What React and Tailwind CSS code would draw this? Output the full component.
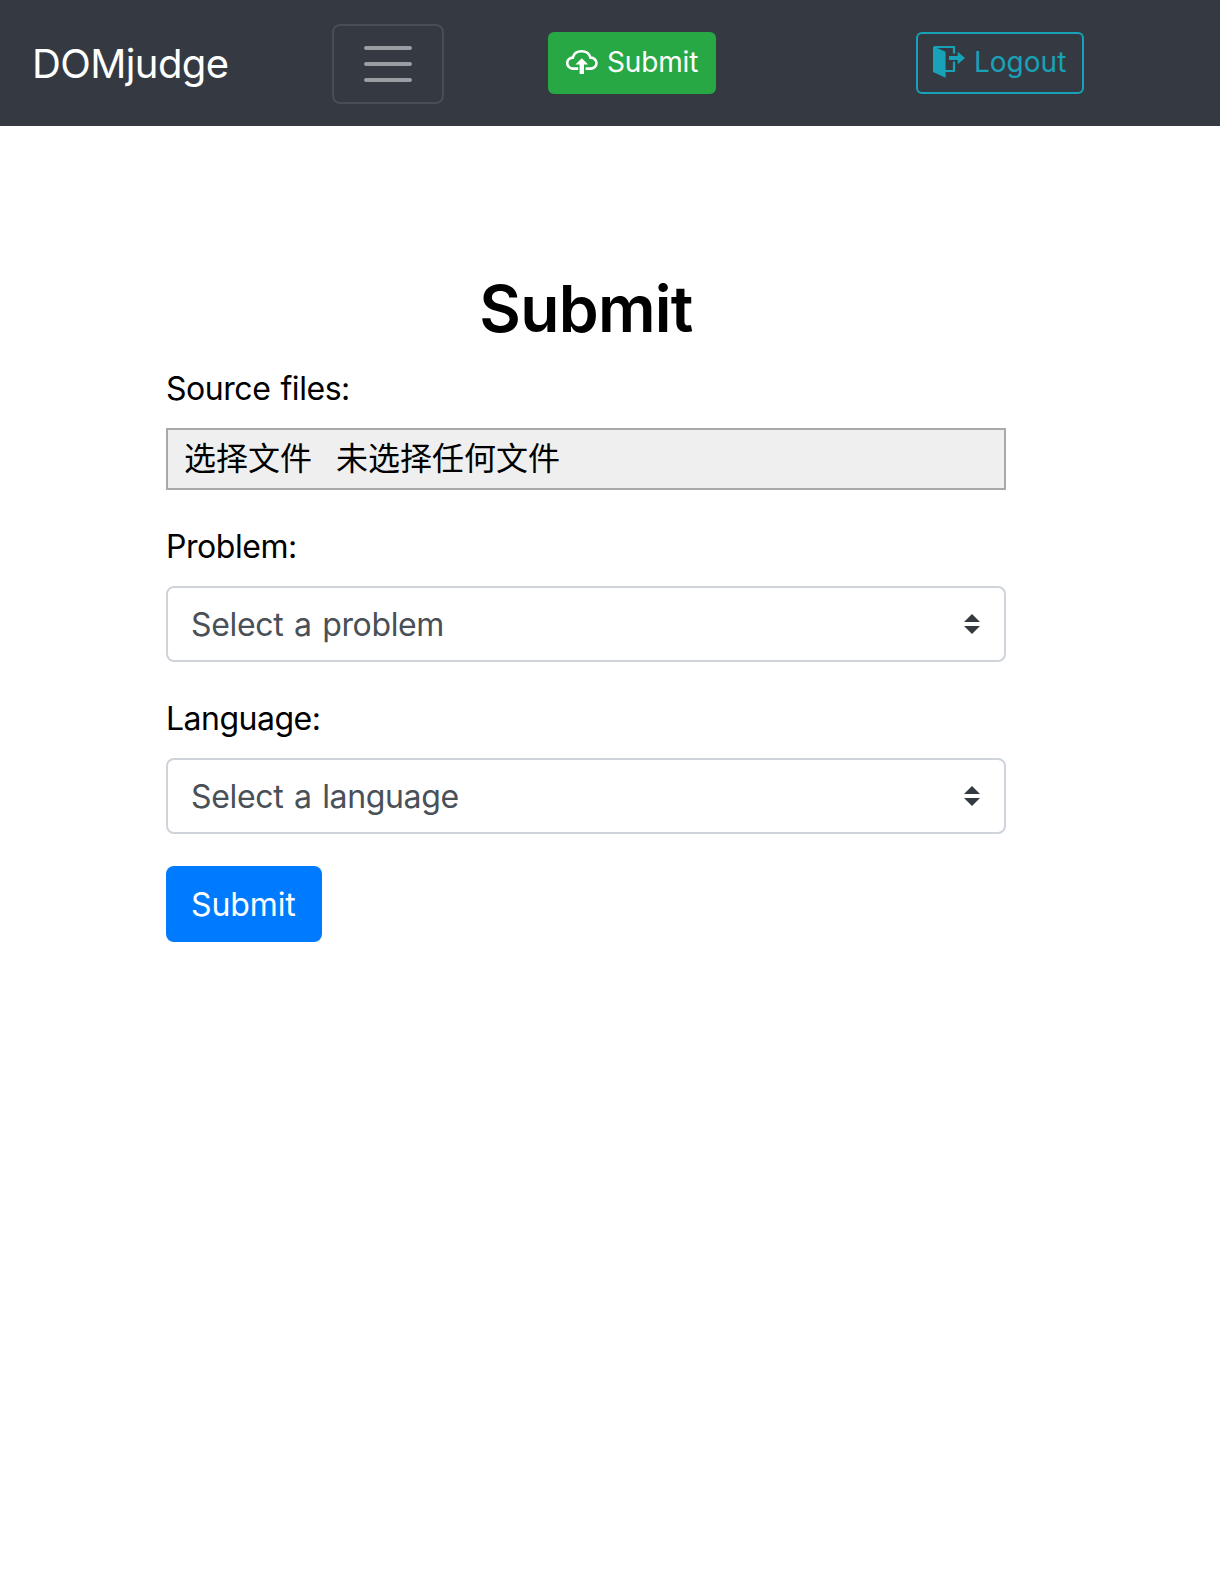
function CloudUpload() {
  return (
    <svg className="h-8 w-8 shrink-0" viewBox="0 0 32 32" fill="none">
      <path d="M12.200 22.600H6.700A5.500 5.500 0 0 1 6.800 11.600C7.800 7.600 11.400 5.200 15.600 5.200c4.200 0 7.800 2.500 8.900 6.400A5.500 5.500 0 0 1 25.300 22.600H19.600" stroke="currentColor" strokeWidth="2.600" />
      <path d="M15.800 12.300l6.400 6.200h-4.200V28h-4.400v-9.500H9.400z" fill="currentColor" />
    </svg>
  );
}

function DoorExit() {
  return (
    <svg className="h-8 w-8 shrink-0" viewBox="0 0 32 32" fill="none">
      <path d="M1 1H21V7.500M21 15.500V25H12" stroke="currentColor" strokeWidth="2.200" strokeLinejoin="round" />
      <path d="M0 1L2 1 12.600 5.800v26L0 26z" fill="currentColor" />
      <path d="M16 10h8.700V5.800l7.300 6.200-7.300 6.200V14H16z" fill="currentColor" />
    </svg>
  );
}

function SelectBox({ children }) {
  return (
    <button className="flex h-[76px] w-full items-center justify-between rounded-lg border-2 border-[#ced4da] bg-white pr-6 pl-[23px] text-left text-[#495057]">
      <span className="pt-px tracking-[-0.35px] [word-spacing:2px]">{children}</span>
      <svg className="h-5 w-4" viewBox="0 0 16 20" fill="#343a40">
        <path d="M0 8L8 0l8 8zM0 12h16l-8 8z" />
      </svg>
    </button>
  );
}

export default function App() {
  return (
    <div className="min-h-[1589px] bg-white font-['Inter','Noto_Sans_CJK_SC',sans-serif] text-[32px] leading-[48px] text-black">
      <nav className="flex h-[126px] items-start bg-[#353a42] pt-6">
        <a className="ml-8 w-[300px] pt-2.5 text-[40px] leading-[60px] tracking-[-0.6px] text-white">DOMjudge</a>
        <button className="flex h-20 w-28 flex-col items-center justify-center gap-3 rounded-lg border-2 border-[#494d54]">
          <span className="h-1 w-12 rounded-full bg-[#9a9da1]" />
          <span className="h-1 w-12 rounded-full bg-[#9a9da1]" />
          <span className="h-1 w-12 rounded-full bg-[#9a9da1]" />
        </button>
        <button className="mt-2 ml-[104px] flex h-[62px] w-[168px] items-center rounded-md bg-[#28a745] pb-0.5 pl-[18px] text-[28px] leading-[42px] text-white">
          <CloudUpload />
          <span className="ml-[9px] tracking-[-0.15px]">Submit</span>
        </button>
        <button className="mt-2 ml-[200px] flex h-[62px] w-[168px] items-center rounded-md border-2 border-[#17a2b8] pb-0.5 pl-[15px] text-[28px] leading-[42px] text-[#17a2b8]">
          <DoorExit />
          <span className="ml-[9px]">Logout</span>
        </button>
      </nav>
      <main className="ml-[166px] w-[840px] pt-[144px]">
        <h1 className="h-[95px] text-center text-[64px] leading-[78px] font-semibold tracking-[-0.7px]">Submit</h1>
        <label className="block h-[63px] tracking-[-0.45px] [word-spacing:1.5px]">Source files:</label>
        <div className="flex h-[62px] items-center gap-6 border-2 border-[#a9a9a9] bg-[#efefef] pl-4">
          <span>选择文件</span>
          <span>未选择任何文件</span>
        </div>
        <label className="mt-[33px] block h-[63px] tracking-[-0.45px]">Problem:</label>
        <SelectBox>Select a problem</SelectBox>
        <label className="mt-[33px] block h-[63px] tracking-[-0.5px]">Language:</label>
        <SelectBox>Select a language</SelectBox>
        <button className="mt-8 flex h-[76px] w-[156px] items-center rounded-lg bg-[#007bff] pt-0.5 pl-[25px] text-white">
          <span className="tracking-[-0.1px]">Submit</span>
        </button>
      </main>
    </div>
  );
}
